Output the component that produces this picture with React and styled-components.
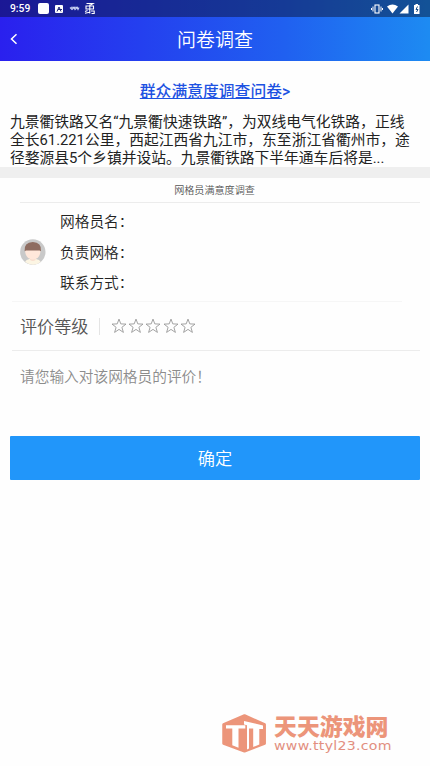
import React from "react";
import styled, { createGlobalStyle } from "styled-components";

const GlobalStyle = createGlobalStyle`
  * { box-sizing: border-box; }
  body {
    margin: 0;
    background: #fefefe;
    font-family: Roboto, "Noto Sans CJK SC", sans-serif;
    color: #222;
  }
`;

const Screen = styled.div`
  width: 430px;
  height: 766px;
  overflow: hidden;
  display: flex;
  flex-direction: column;
`;

const Header = styled.header`
  flex: none;
  height: 61px;
  background: linear-gradient(90deg, #2a20ee 0%, #2440ef 33%, #2060f0 66%, #1d8bf2 100%);
  color: #fff;
`;

const StatusBar = styled.div`
  height: 17px;
  padding: 0 9px 0 10px;
  display: flex;
  align-items: center;
  justify-content: space-between;
  background: rgba(8, 14, 40, 0.45);
`;

const StatusGroup = styled.div`
  display: flex;
  align-items: center;
  gap: 6px;
`;

const Clock = styled.span`
  width: 21px;
  padding-top: 1px;
  font-size: 10.3px;
  font-weight: 500;
  line-height: 16px;
  white-space: nowrap;
`;

const TitleBar = styled.div`
  height: 44px;
  display: grid;
  grid-template-columns: 40px 1fr 40px;
  align-items: center;
`;

const BackButton = styled.button`
  padding: 0 0 0 9px;
  border: 0;
  background: none;
  color: #fff;
  display: flex;
`;

const Title = styled.h1`
  margin: 0;
  padding-top: 4px;
  text-align: center;
  font-size: 19px;
  line-height: 26px;
  font-weight: 350;
`;

const Intro = styled.section`
  flex: none;
  height: 106px;
  padding: 19px 10px 0;
`;

const SurveyLink = styled.div`
  text-align: center;
  font-size: 15.8px;
  line-height: 24px;
  font-weight: 500;
  color: #1d52e2;
  span {
    text-decoration: underline;
    text-underline-offset: 1px;
    text-decoration-thickness: 1px;
  }
`;

const Description = styled.p`
  margin: 10px 0 0;
  font-size: 14.78px;
  line-height: 17.8px;
  white-space: nowrap;
  span { display: block; }
`;

const Divider = styled.div`
  flex: none;
  height: 11px;
  background: #efefef;
`;

const SectionTitle = styled.h2`
  flex: none;
  height: 25px;
  margin: 0 10px 0 20px;
  padding-right: 11px;
  border-bottom: 1px solid #ececec;
  text-align: center;
  font-size: 10.1px;
  line-height: 25px;
  font-weight: 350;
  color: #555;
`;

const Officer = styled.section`
  flex: none;
  height: 99px;
  margin: 0 28px 0 12px;
  padding-left: 8px;
  border-bottom: 1px solid #f6f6f6;
  display: flex;
  align-items: center;
  gap: 14px;
`;

const Fields = styled.div`
  display: flex;
  flex-direction: column;
  font-size: 14.7px;
  line-height: 30.7px;
  font-weight: 350;
  padding-top: 2px;
`;

const Rating = styled.section`
  flex: none;
  height: 49px;
  margin: 0 10px 0 12px;
  padding-left: 8px;
  border-bottom: 1px solid #ececec;
  display: flex;
  align-items: center;
`;

const RatingLabel = styled.span`
  width: 80px;
  height: 17px;
  border-right: 1px solid #e4e4e4;
  font-size: 17.1px;
  line-height: 19px;
  font-weight: 350;
  color: #555;
`;

const Stars = styled.div`
  display: flex;
  padding-left: 11px;
  gap: 1.2px;
`;

const Comment = styled.div`
  flex: none;
  height: 85px;
  padding: 15px 20px;
  font-size: 14.7px;
  line-height: 22px;
  font-weight: 350;
  color: #8c8c8c;
`;

const Submit = styled.button`
  flex: none;
  height: 44px;
  margin: 0 10px;
  padding: 2px 0 0;
  border: 0;
  border-radius: 1px;
  background: #2196fa;
  color: #fff;
  font: 350 17.2px/24px Roboto, "Noto Sans CJK SC", sans-serif;
`;

const Brand = styled.footer`
  margin-top: auto;
  height: 53px;
  padding-left: 221px;
  display: flex;
  align-items: flex-start;
  gap: 6px;
  color: #ec957a;
`;

const BrandText = styled.div`
  white-space: nowrap;
`;

const BrandName = styled.div`
  font: 900 22.9px/25px "Noto Sans CJK SC", sans-serif;
`;

const BrandUrl = styled.div`
  font: 400 12.4px/15px "DejaVu Sans", sans-serif;
  letter-spacing: 0.25px;
  transform: scaleX(1.14);
  transform-origin: left;
  color: #e28f80;
`;

const Star = () => (
  <svg width="16" height="16" viewBox="0 0 16 16" fill="none" stroke="#999" strokeWidth="0.9">
    <path d="M8 1.1 9.8 5.9 15 6.1 10.9 9.3 12.4 14.4 8 11.4 3.6 14.4 5.1 9.3 1 6.1 6.2 5.9Z" />
  </svg>
);

const Avatar = () => (
  <svg width="26" height="26" viewBox="0 0 26 26">
    <circle cx="12.8" cy="13" r="12.7" fill="#c9c9c9" />
    <path d="M5 23Q6 20.5 9.5 20H16Q19.7 20.5 20.7 23 17 25.8 13 25.7 9 25.7 5 23Z" fill="#fcf5e3" />
    <path d="M10 17H15.6V21Q13 23 10 21Z" fill="#f8decf" />
    <path d="M5.2 9H20.4V13Q19.6 20 13 20.6 6 20 5.2 13Z" fill="#ffe7da" />
    <path d="M4.6 12.2Q3.8 3.3 12.8 3 21.8 3.3 21 12.2L19.6 11.6H6Z" fill="#8e6c60" />
  </svg>
);

const StatusIcons = () => (
  <StatusGroup>
    <Clock>9:59</Clock>
    <svg width="60" height="13" viewBox="0 0 60 13" fill="#fff">
      <rect x="1" y="1" width="11" height="11" rx="2" />
      <rect x="18" y="3" width="8" height="8" rx="1" />
      <path d="M20 9.5 22 5l2 4.5M21 7.5h4" fill="none" stroke="#222879" />
      <path d="M33 5.5l2 2 2-2 1 2 2-2 1 2 1-2M34 5.2h7" fill="none" stroke="#ccd4f4" strokeWidth="1.1" />
      <path d="M49.5 1.5H56L53.5 3M49 4h7.5v3H49zM52.8 2.5v9M48 11.3l4.5-1M50.5 8.5 48 9.5M54 9h3.2v2.5H54.5" fill="none" stroke="#fff" strokeWidth="1.1" />
    </svg>
  </StatusGroup>
);

const SignalIcons = () => (
  <svg width="50" height="12" viewBox="0 0 50 12" fill="#fff">
    <rect x="4" y="2" width="4" height="8" fill="none" stroke="#fff" strokeWidth="1.1" />
    <path d="M2 3.5v5M.5 5v2M10 3.5v5M11.5 5v2" stroke="#fff" />
    <path d="M16 3.6Q21.5-.5 27 3.6L21.5 10.5Z" />
    <path d="M37.5 1.5V10.5H28.5Z" />
    <path d="M44.5 1h2.5v1h1.5v9H43V2h1.5z" />
    <path d="M46.5 3.5 45 6.5h2L45.5 9" fill="none" stroke="#174b88" />
  </svg>
);

const BrandMark = () => (
  <svg width="47" height="41" viewBox="0 0 47 41" fill="none">
    <path d="M23.5 2.5 43.6 11.6V30.4L23.5 38.2 2.6 30.4V11.6Z" fill="#ec957a" stroke="#ec957a" strokeWidth="2.7" strokeLinejoin="round" />
    <path d="M5 12.3H24.3V15.5H17.5V34.8L11.3 32.3V15.5H5Z" fill="#fff" />
    <path d="M23 8 42 12.5V16H38.3V31.5L32.2 34V15.5H28V35.6L26 36.4V12.2L23 11.5Z" fill="#fff" />
  </svg>
);

const fields = ["网格员名：", "负责网格：", "联系方式："];

export default function App() {
  return (
    <Screen>
      <GlobalStyle />
      <Header>
        <StatusBar>
          <StatusIcons />
          <SignalIcons />
        </StatusBar>
        <TitleBar>
          <BackButton aria-label="返回">
            <svg width="9" height="12" viewBox="0 0 9 12" fill="none" stroke="#fff" strokeWidth="1.5">
              <path d="M7.5 1.2 2.5 6l5 4.8" />
            </svg>
          </BackButton>
          <Title>问卷调查</Title>
        </TitleBar>
      </Header>
      <Intro>
        <SurveyLink><span>群众满意度调查问卷</span>&gt;</SurveyLink>
        <Description>
          <span>九景衢铁路又名“九景衢快速铁路”，为双线电气化铁路，正线</span>
          <span>全长61.221公里，西起江西省九江市，东至浙江省衢州市，途</span>
          <span>径婺源县5个乡镇并设站。九景衢铁路下半年通车后将是...</span>
        </Description>
      </Intro>
      <Divider />
      <SectionTitle>网格员满意度调查</SectionTitle>
      <Officer>
        <Avatar />
        <Fields>{fields.map((f) => <span key={f}>{f}</span>)}</Fields>
      </Officer>
      <Rating>
        <RatingLabel>评价等级</RatingLabel>
        <Stars>{[1, 2, 3, 4, 5].map((n) => <Star key={n} />)}</Stars>
      </Rating>
      <Comment>请您输入对该网格员的评价！</Comment>
      <Submit>确定</Submit>
      <Brand>
        <BrandMark />
        <BrandText>
          <BrandName>天天游戏网</BrandName>
          <BrandUrl>www.ttyl23.com</BrandUrl>
        </BrandText>
      </Brand>
    </Screen>
  );
}
